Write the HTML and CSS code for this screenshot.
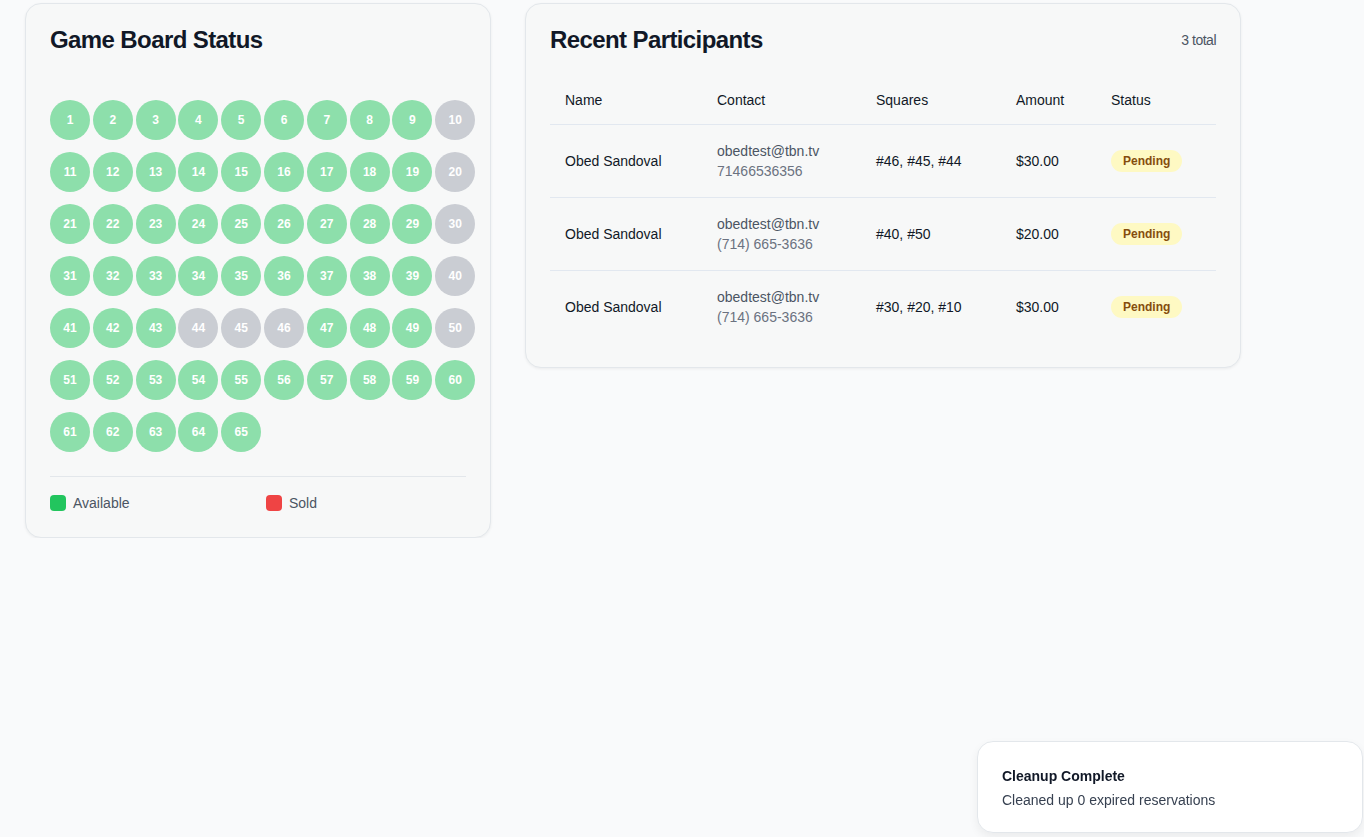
FILE: index.html
```html
<!DOCTYPE html>
<html lang="en">
<head>
<meta charset="utf-8">
<title>Game Board</title>
<link rel="stylesheet" href="styles.css">
</head>
<body>
<main class="layout">
  <section class="card board-card">
    <h2 class="card-title">Game Board Status</h2>
    <div class="board" id="board">
      <span class="sq avail">1</span><span class="sq avail">2</span><span class="sq avail">3</span><span class="sq avail">4</span><span class="sq avail">5</span><span class="sq avail">6</span><span class="sq avail">7</span><span class="sq avail">8</span><span class="sq avail">9</span><span class="sq taken">10</span>
      <span class="sq avail">11</span><span class="sq avail">12</span><span class="sq avail">13</span><span class="sq avail">14</span><span class="sq avail">15</span><span class="sq avail">16</span><span class="sq avail">17</span><span class="sq avail">18</span><span class="sq avail">19</span><span class="sq taken">20</span>
      <span class="sq avail">21</span><span class="sq avail">22</span><span class="sq avail">23</span><span class="sq avail">24</span><span class="sq avail">25</span><span class="sq avail">26</span><span class="sq avail">27</span><span class="sq avail">28</span><span class="sq avail">29</span><span class="sq taken">30</span>
      <span class="sq avail">31</span><span class="sq avail">32</span><span class="sq avail">33</span><span class="sq avail">34</span><span class="sq avail">35</span><span class="sq avail">36</span><span class="sq avail">37</span><span class="sq avail">38</span><span class="sq avail">39</span><span class="sq taken">40</span>
      <span class="sq avail">41</span><span class="sq avail">42</span><span class="sq avail">43</span><span class="sq taken">44</span><span class="sq taken">45</span><span class="sq taken">46</span><span class="sq avail">47</span><span class="sq avail">48</span><span class="sq avail">49</span><span class="sq taken">50</span>
      <span class="sq avail">51</span><span class="sq avail">52</span><span class="sq avail">53</span><span class="sq avail">54</span><span class="sq avail">55</span><span class="sq avail">56</span><span class="sq avail">57</span><span class="sq avail">58</span><span class="sq avail">59</span><span class="sq avail">60</span>
      <span class="sq avail">61</span><span class="sq avail">62</span><span class="sq avail">63</span><span class="sq avail">64</span><span class="sq avail">65</span>
    </div>
    <div class="legend">
      <div class="legend-item"><span class="swatch swatch-green"></span>Available</div>
      <div class="legend-item"><span class="swatch swatch-red"></span>Sold</div>
    </div>
  </section>

  <section class="card participants-card">
    <div class="card-head">
      <h2 class="card-title">Recent Participants</h2>
      <span class="count">3 total</span>
    </div>
    <table class="ptable">
      <colgroup>
        <col class="c-name"><col class="c-contact"><col class="c-squares"><col class="c-amount"><col>
      </colgroup>
      <thead>
        <tr><th>Name</th><th>Contact</th><th>Squares</th><th>Amount</th><th>Status</th></tr>
      </thead>
      <tbody>
        <tr>
          <td>Obed Sandoval</td>
          <td><div class="email">obedtest@tbn.tv</div><div class="phone">71466536356</div></td>
          <td>#46, #45, #44</td>
          <td>$30.00</td>
          <td><span class="badge">Pending</span></td>
        </tr>
        <tr>
          <td>Obed Sandoval</td>
          <td><div class="email">obedtest@tbn.tv</div><div class="phone">(714) 665-3636</div></td>
          <td>#40, #50</td>
          <td>$20.00</td>
          <td><span class="badge">Pending</span></td>
        </tr>
        <tr>
          <td>Obed Sandoval</td>
          <td><div class="email">obedtest@tbn.tv</div><div class="phone">(714) 665-3636</div></td>
          <td>#30, #20, #10</td>
          <td>$30.00</td>
          <td><span class="badge">Pending</span></td>
        </tr>
      </tbody>
    </table>
  </section>
</main>

<div class="toast">
  <div class="toast-title">Cleanup Complete</div>
  <div class="toast-desc">Cleaned up 0 expired reservations</div>
</div>
</body>
</html>
```

FILE: styles.css
```css
* { box-sizing: border-box; }

html, body {
  margin: 0;
  padding: 0;
  background: #f9fafb;
  font-family: "Liberation Sans", Arial, sans-serif;
  color: #111827;
}

.layout {
  display: flex;
  align-items: flex-start;
  gap: 34px;
  padding: 3px 0 0 25px;
}

.card {
  background: #f7f8f8;
  border: 1px solid #e3e7eb;
  border-radius: 16px;
  box-shadow: 0 1px 3px rgba(0, 0, 0, 0.06);
  padding: 24px;
}

.board-card { width: 466px; }
.participants-card { width: 716px; }

.card-title {
  margin: 0;
  font-size: 24px;
  line-height: 24px;
  font-weight: 700;
  letter-spacing: -0.025em;
  color: #111827;
}

.board {
  margin-top: 48px;
  display: grid;
  grid-template-columns: repeat(10, minmax(0, 1fr));
  gap: 12px;
}

.sq {
  width: 40px;
  height: 40px;
  border-radius: 50%;
  display: flex;
  align-items: center;
  justify-content: center;
  color: #ffffff;
  font-size: 12px;
  font-weight: 700;
}

.sq.avail { background: #8ddfab; }
.sq.taken { background: #cacdd3; }

.legend {
  margin-top: 24px;
  border-top: 1px solid #e3e7eb;
  padding-top: 16px;
  display: grid;
  grid-template-columns: 1fr 1fr;
  gap: 16px;
}

.legend-item {
  display: flex;
  align-items: center;
  gap: 7px;
  font-size: 14px;
  line-height: 20px;
  color: #4b5563;
}

.swatch {
  width: 16px;
  height: 16px;
  border-radius: 4px;
}
.swatch-green { background: #22c55e; }
.swatch-red { background: #ef4444; }

.card-head {
  display: flex;
  justify-content: space-between;
  align-items: center;
}

.count {
  font-size: 14px;
  letter-spacing: -0.5px;
  color: #4b5563;
}

.ptable {
  margin-top: 24px;
  width: 100%;
  border-collapse: collapse;
  table-layout: fixed;
  font-size: 14px;
  line-height: 20px;
}

.c-name { width: 152px; }
.c-contact { width: 159px; }
.c-squares { width: 140px; }
.c-amount { width: 95px; }

.ptable th {
  text-align: left;
  font-weight: 400;
  color: #111827;
  padding: 14px 15px;
  border-bottom: 1px solid #e2e8f0;
}

.ptable td {
  padding: 16px 15px;
  vertical-align: middle;
  color: #111827;
}

.ptable tbody tr + tr td { border-top: 1px solid #e2e8f0; }

.email { color: #4b5563; }
.phone { color: #6b7280; }

.badge {
  display: inline-block;
  padding: 3px 12px;
  border-radius: 999px;
  background: #fef9c3;
  color: #854d0e;
  font-size: 12px;
  line-height: 16px;
  font-weight: 700;
}

.toast {
  position: fixed;
  right: 1px;
  bottom: 4px;
  width: 386px;
  background: #ffffff;
  border: 1px solid #e3e7eb;
  border-radius: 16px;
  box-shadow: 0 4px 10px rgba(0, 0, 0, 0.06);
  padding: 24px 24px 22px;
}

.toast-title {
  font-size: 14px;
  line-height: 20px;
  font-weight: 700;
  color: #111827;
}

.toast-desc {
  margin-top: 4px;
  font-size: 14px;
  line-height: 20px;
  color: #374151;
}
```
